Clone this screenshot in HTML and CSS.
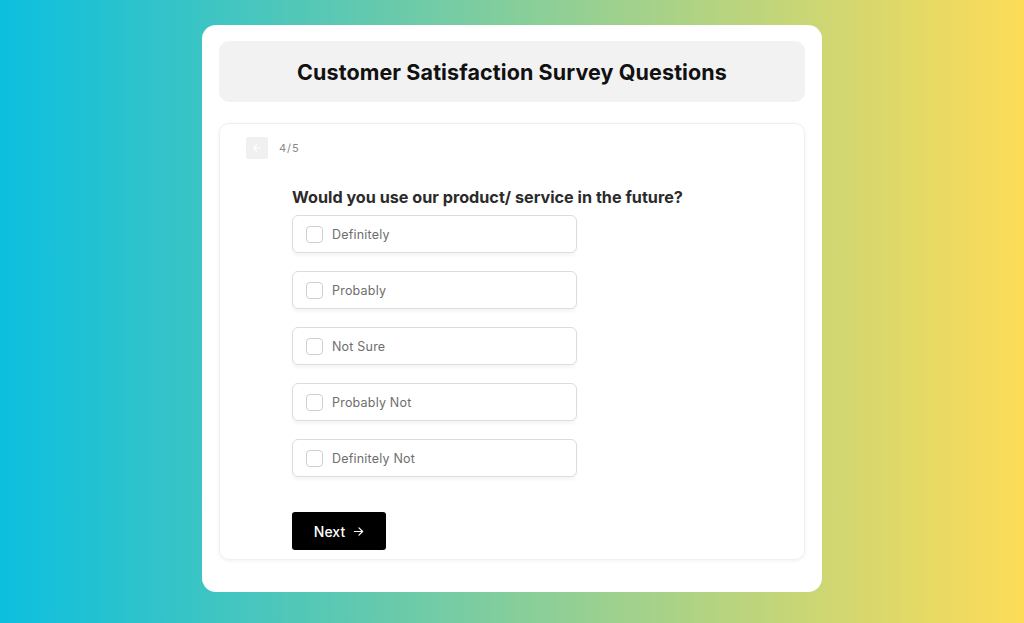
FILE: index.html
```html
<!DOCTYPE html>
<html lang="en">
<head>
  <meta charset="UTF-8">
  <meta name="viewport" content="width=device-width, initial-scale=1.0">
  <title>Customer Satisfaction Survey</title>
  <link rel="stylesheet" href="styles.css">
</head>
<body>
  <div class="survey">
    <div class="survey-title">
      <h1>Customer Satisfaction Survey Questions</h1>
    </div>

    <div class="survey-body">
      <div class="step">
        <button class="back-btn" aria-label="Back">
          <svg width="10" height="10" viewBox="0 0 10 10" fill="none" stroke="#fff" stroke-width="1.2" stroke-linecap="round" stroke-linejoin="round">
            <path d="M8.5 5H1.5M4.5 2L1.5 5L4.5 8"/>
          </svg>
        </button>
        <span class="step-count">4/5</span>
      </div>

      <div class="question">
        <h2>Would you use our product/ service in the future?</h2>
        <div class="options">
          <label class="option"><span class="box"></span>Definitely</label>
          <label class="option"><span class="box"></span>Probably</label>
          <label class="option"><span class="box"></span>Not Sure</label>
          <label class="option"><span class="box"></span>Probably Not</label>
          <label class="option"><span class="box"></span>Definitely Not</label>
        </div>
        <button class="btn-next">Next
          <svg width="11" height="11" viewBox="0 0 12 12" fill="none" stroke="#fff" stroke-width="1.3" stroke-linecap="round" stroke-linejoin="round">
            <path d="M1.5 6H10.5M6.5 2L10.5 6L6.5 10"/>
          </svg>
        </button>
      </div>
    </div>
  </div>
</body>
</html>
```

FILE: styles.css
```css
body { margin: 0; min-height: 623px; background: linear-gradient(to right, #0cbfdf, #fddc58); font-family: Inter, 'Open Sans', sans-serif; display: flex; justify-content: center; align-items: flex-start; padding-top: 25px; box-sizing: border-box; }

.survey { width: 620px; background: #fff; border-radius: 14px; padding: 16px 17px 32px; box-sizing: border-box; }

.survey-title { background: #f2f2f3; border-radius: 10px; height: 61px; display: flex; align-items: center; justify-content: center; }
.survey-title h1 { margin: 0; font-size: 21.5px; font-weight: 700; color: #111; letter-spacing: 0.1px; }

.survey-body { margin-top: 21px; border: 1px solid #f0f0f0; border-radius: 10px; box-shadow: 0 1px 4px rgba(0,0,0,0.06); padding: 13px 26px 9px; }

.step { display: flex; align-items: center; gap: 11px; }
.back-btn { width: 22px; height: 22px; border: none; border-radius: 2px; background: #f0f0f0; display: flex; align-items: center; justify-content: center; padding: 0; }
.step-count { font-size: 11px; color: #888; letter-spacing: 1px; }

.question { padding-left: 46px; margin-top: 28px; }
.question h2 { margin: 0 0 8px; font-size: 16.2px; font-weight: 700; color: #2b2b2b; }

.options { display: flex; flex-direction: column; gap: 18px; width: 285px; }
.option { height: 38px; box-sizing: border-box; border: 1px solid #dcdcdc; border-radius: 6px; box-shadow: 0 3px 3px rgba(0,0,0,0.04); display: flex; align-items: center; padding-left: 13px; gap: 9px; font-size: 12.5px; color: #6e6e6e; letter-spacing: 0.2px; }
.box { width: 15px; height: 15px; border: 1px solid #cfcfcf; border-radius: 4px; }

.btn-next { margin-top: 35px; width: 94px; height: 38px; border: none; border-radius: 3px; background: #000; color: #fff; font-family: inherit; font-size: 14px; font-weight: 500; display: flex; align-items: center; justify-content: center; gap: 8px; }
```
